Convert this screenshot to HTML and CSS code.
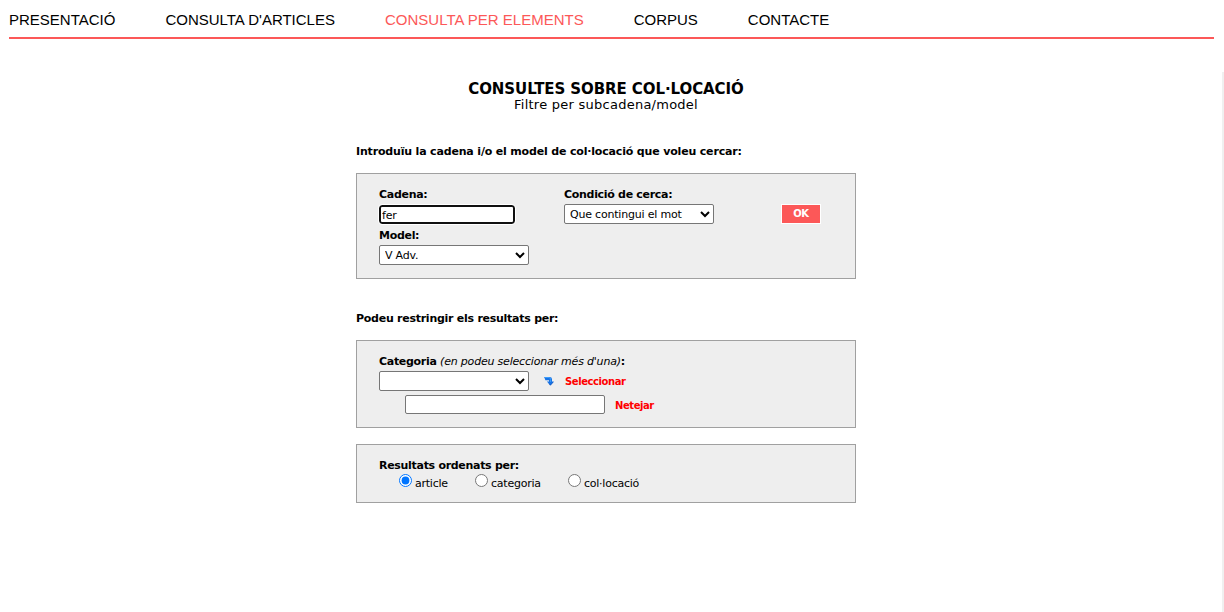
FILE: index.html
```html
<!DOCTYPE html>
<html lang="ca">

<head>
    <meta charset="utf-8">
    <title>Consulta per elements</title>
    <link rel="stylesheet" href="styles.css">
</head>

<body>
    <nav class="menu">
        <a>PRESENTACIÓ</a>
        <a>CONSULTA D'ARTICLES</a>
        <a class="actiu">CONSULTA PER ELEMENTS</a>
        <a>CORPUS</a>
        <a>CONTACTE</a>
    </nav>
    <main class="contingut">
        <form class="consulta">
            <h1>CONSULTES SOBRE COL·LOCACIÓ</h1>
            <div class="subtitol">Filtre per subcadena/model</div>

            <h2 class="intro">Introduïu la cadena i/o el model de col·locació que voleu cercar:</h2>
            <div class="caixa cerca">
                <div class="columna">
                    <label for="cadena">Cadena:</label>
                    <input type="text" class="cadena" id="cadena" value="fer">
                    <label for="model">Model:</label>
                    <select id="model"><option>V Adv.</option></select>
                </div>
                <div class="columna">
                    <label for="condicio">Condició de cerca:</label>
                    <select id="condicio"><option>Que contingui el mot</option></select>
                </div>
                <button type="button" class="ok">OK</button>
            </div>

            <h2 class="restriccio">Podeu restringir els resultats per:</h2>
            <div class="caixa categories">
                <label for="categoria">Categoria <i>(en podeu seleccionar més d'una)</i>:</label>
                <div class="fila">
                    <select id="categoria"><option></option></select>
                    <svg class="fletxa" width="10" height="10" viewBox="0 0 10 10">
                        <path d="M0.2 1H5.5Q8 1 8 3.2V5.4H10L6.4 9.6L2.9 5.4H5V4.2H1.4Z" fill="#1673e6"/>
                        <path d="M0.5 1.5H5Q6.6 1.6 6.6 3.4V6" fill="none" stroke="#3d9dfa"/>
                        <path d="M9.2 6L6.4 9.2L5 7.6" fill="none" stroke="#1450b4" stroke-width="0.7"/>
                    </svg>
                    <a class="accio">Seleccionar</a>
                </div>
                <div class="fila seleccio">
                    <input type="text" class="triades">
                    <a class="accio">Netejar</a>
                </div>
            </div>

            <div class="caixa ordre">
                <label>Resultats ordenats per:</label>
                <div class="opcions">
                    <label class="opcio o1"><input type="radio" name="ordre" checked><span>article</span></label>
                    <label class="opcio o2"><input type="radio" name="ordre"><span>categoria</span></label>
                    <label class="opcio"><input type="radio" name="ordre"><span>col·locació</span></label>
                </div>
            </div>
        </form>
    </main>
</body>

</html>
```
FILE: styles.css
```css
* {
    box-sizing: border-box;
}

body {
    margin: 0;
    height: 612px;
    overflow: hidden;
    background-color: #fff;
    color: #000;
    font-family: Verdana, "DejaVu Sans", sans-serif;
    font-size: 11px;
}

.menu {
    display: flex;
    gap: 50px;
    height: 39px;
    margin: 0 10px 33px 9px;
    padding-top: 10px;
    border-bottom: 2px solid #fc5858;
    font: 15px/20px Arial, "Liberation Sans", sans-serif;
    white-space: nowrap;
}

.actiu {
    color: #fc5858;
}

.contingut {
    height: 540px;
    border-right: 2px solid #f0f0f0;
}

.consulta {
    width: 500px;
    margin-left: 356px;
    padding-top: 9px;
}

h1 {
    margin: 0;
    font-size: 15px;
    line-height: 16px;
    text-align: center;
    letter-spacing: -0.08px;
}

.subtitol {
    font-size: 13px;
    line-height: 16px;
    text-align: center;
    letter-spacing: 0.25px;
}

h2 {
    font-size: 11px;
    line-height: 14px;
    white-space: nowrap;
}

.intro {
    margin: 32px 0 14px;
    letter-spacing: -0.17px;
}

.restriccio {
    margin: 33px 0 14px;
    letter-spacing: -0.26px;
}

.caixa {
    border: 1px solid #a0a0a0;
    background-color: #eee;
    padding: 14px 22px 0;
}

.caixa label {
    display: block;
    height: 14px;
    font-weight: bold;
    line-height: 14px;
    white-space: nowrap;
    letter-spacing: -0.3px;
}

.caixa i {
    font-weight: normal;
    letter-spacing: -0.2px;
}

select,
input[type=text] {
    display: block;
    height: 20px;
    margin: 0;
    border: 1px solid #767676;
    border-radius: 2px;
    background-color: #fff;
    color: #000;
    font-family: Tahoma, "DejaVu Sans", sans-serif;
    font-size: 11px;
    letter-spacing: -0.2px;
}

select {
    width: 150px;
    padding: 0 1px;
}

.cerca {
    display: flex;
    height: 106px;
}

.columna {
    width: 185px;
}

.columna select {
    margin-top: 2px;
}

input.cadena {
    width: 136px;
    height: 19px;
    margin: 3px 0 5px;
    padding: 1px 2px 0 1px;
    border: 2px solid #101010;
    border-radius: 3px;
    outline: 1px solid #fff;
    outline-offset: 0;
}

.ok {
    width: 40px;
    height: 20px;
    margin: 16px 0 0 32px;
    padding: 0 0 2px;
    border: 1px solid #fff;
    background-color: #fc5858;
    color: #fff;
    font: bold 10px Verdana, "DejaVu Sans", sans-serif;
    letter-spacing: -0.4px;
}

.categories {
    height: 88px;
}

.fila {
    display: flex;
    align-items: center;
    margin-top: 2px;
}

.fletxa {
    margin: 0 11px 1px 15px;
}

.accio {
    color: #f00;
    font-size: 10px;
    font-weight: bold;
    letter-spacing: -0.42px;
}

.seleccio {
    margin: 4px 0 0 26px;
}

.seleccio .accio {
    padding-top: 2px;
}

input.triades {
    width: 200px;
    height: 19px;
    margin-right: 10px;
}

.ordre {
    height: 59px;
    margin-top: 16px;
}

.opcions {
    display: flex;
    padding-left: 20px;
}

.caixa .opcio {
    display: flex;
    height: 20px;
    font-weight: normal;
    letter-spacing: -0.24px;
}

.opcio input {
    width: 13px;
    height: 13px;
    margin: 1px 3px 0 0;
}

.opcio span {
    padding-top: 4px;
}

.o1 {
    width: 76px;
}

.o2 {
    width: 93px;
}
```
